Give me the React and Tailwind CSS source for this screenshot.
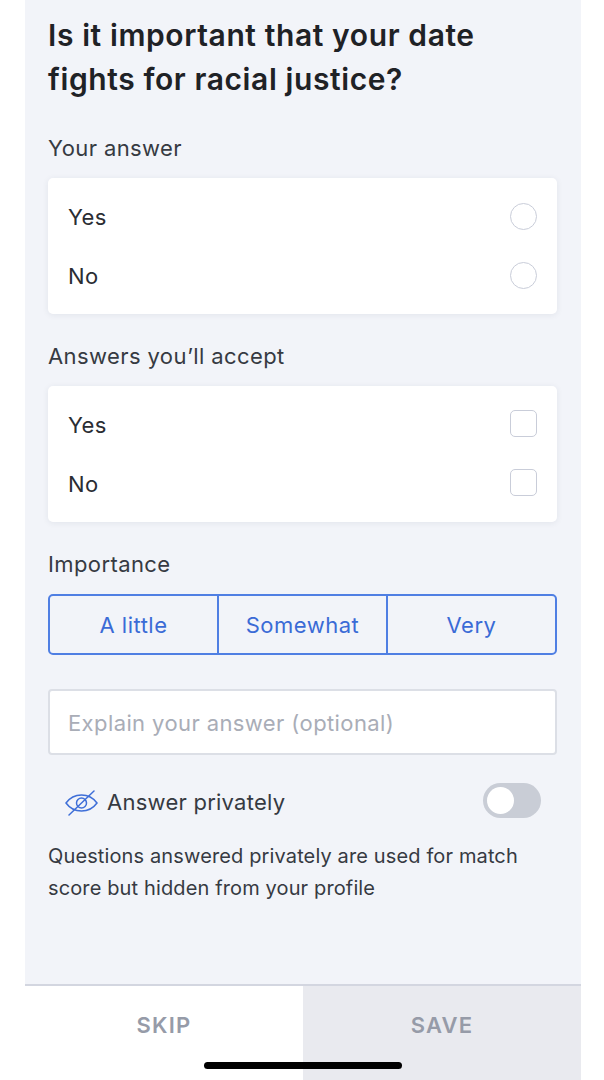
function AnswerCard({ children }) {
  return (
    <div className="mt-[13px] h-[136px] rounded-[5px] bg-white py-[9px] pl-[20px] pr-[20px] shadow-[0_1px_6px_rgba(40,50,80,0.08)]">
      {children}
    </div>
  );
}

function Option({ label, square }) {
  return (
    <div className="flex h-[59px] items-center justify-between text-[22px] tracking-[0.3px] text-[#2a2d33]">
      <span className="mt-[2px]">{label}</span>
      <span
        className={`h-[27px] w-[27px] border-[1.5px] border-[#c9cdd9] bg-white ${square ? "mb-[2px] rounded-[5px]" : "rounded-full"}`}
      ></span>
    </div>
  );
}

function EyeOff() {
  return (
    <svg width="33" height="26" viewBox="0 0 33 26" fill="none" stroke="#3f6fd8" strokeWidth="1.5" strokeLinecap="round">
      <path d="M1 13C5 7.5 10.5 5 16.5 5S28 7.5 32 13C28 18.5 22.5 21 16.5 21S5 18.5 1 13Z" />
      <circle cx="16.5" cy="13" r="5" />
      <path d="M4 25L29 1" />
    </svg>
  );
}

export default function App() {
  return (
    <div className="min-h-screen bg-white pl-[25px] pr-[23px] font-['Inter',sans-serif]">
      <div className="relative flex h-[1080px] flex-col overflow-hidden bg-[#f2f4f9]">
        <div className="flex-1 pl-[23px] pr-[24px]">
          <h1 className="mt-[13px] text-[30px] font-semibold leading-[44px] tracking-[0.6px] text-[#1f2226]">
            Is it important that your date
            <br />
            fights for racial justice?
          </h1>

          <p className="mt-[30px] text-[22px] leading-[34px] tracking-[0.4px] text-[#363a42]">Your answer</p>
          <AnswerCard>
            <Option label="Yes" />
            <Option label="No" />
          </AnswerCard>

          <p className="mt-[25px] text-[22px] leading-[34px] tracking-[0.4px] text-[#363a42]">Answers you’ll accept</p>
          <AnswerCard>
            <Option label="Yes" square />
            <Option label="No" square />
          </AnswerCard>

          <p className="mt-[25px] text-[22px] leading-[34px] tracking-[0.4px] text-[#363a42]">Importance</p>
          <div className="mt-[13px] flex h-[61px] rounded-[5px] border-2 border-[#4f7fe3] text-[22px] tracking-[0.5px] text-[#3a6bd6]">
            <div className="flex flex-1 items-center justify-center pt-[2px]">A little</div>
            <div className="flex flex-1 items-center justify-center border-x-2 border-[#4f7fe3] pt-[2px]">Somewhat</div>
            <div className="flex flex-1 items-center justify-center pt-[2px]">Very</div>
          </div>

          <div className="mt-[34px] flex h-[66px] items-center rounded-[4px] border-2 border-[#dcdfe6] bg-white pl-[18px] pt-[3px] text-[22px] tracking-[0.4px] text-[#a9adb7]">
            Explain your answer (optional)
          </div>

          <div className="mt-[27px] flex h-[36px] items-center justify-between pl-[17px] pr-[16px]">
            <div className="mt-[5px] flex items-center gap-[9px] text-[22px] tracking-[0.25px] text-[#363a42]">
              <EyeOff />
              <span>Answer privately</span>
            </div>
            <div className="flex h-[35px] w-[58px] items-center rounded-full bg-[#c9cdd6] pl-[4px]">
              <span className="h-[27px] w-[27px] rounded-full bg-white"></span>
            </div>
          </div>

          <p className="mt-[22px] text-[20px] leading-[32px] tracking-[0.13px] text-[#363a42]">
            Questions answered privately are used for match
            <br />
            score but hidden from your profile
          </p>
        </div>

        <div className="flex h-[96px] border-t-2 border-[#d3d6e0] text-[22px] font-semibold tracking-[1.2px] text-[#969ba8]">
          <div className="flex flex-1 items-start justify-center bg-white pt-[23px]">SKIP</div>
          <div className="flex flex-1 items-start justify-center bg-[#e9eaef] pt-[23px]">SAVE</div>
        </div>
        <div className="absolute bottom-[11px] left-[179px] h-[7px] w-[198px] rounded-full bg-black"></div>
      </div>
    </div>
  );
}
